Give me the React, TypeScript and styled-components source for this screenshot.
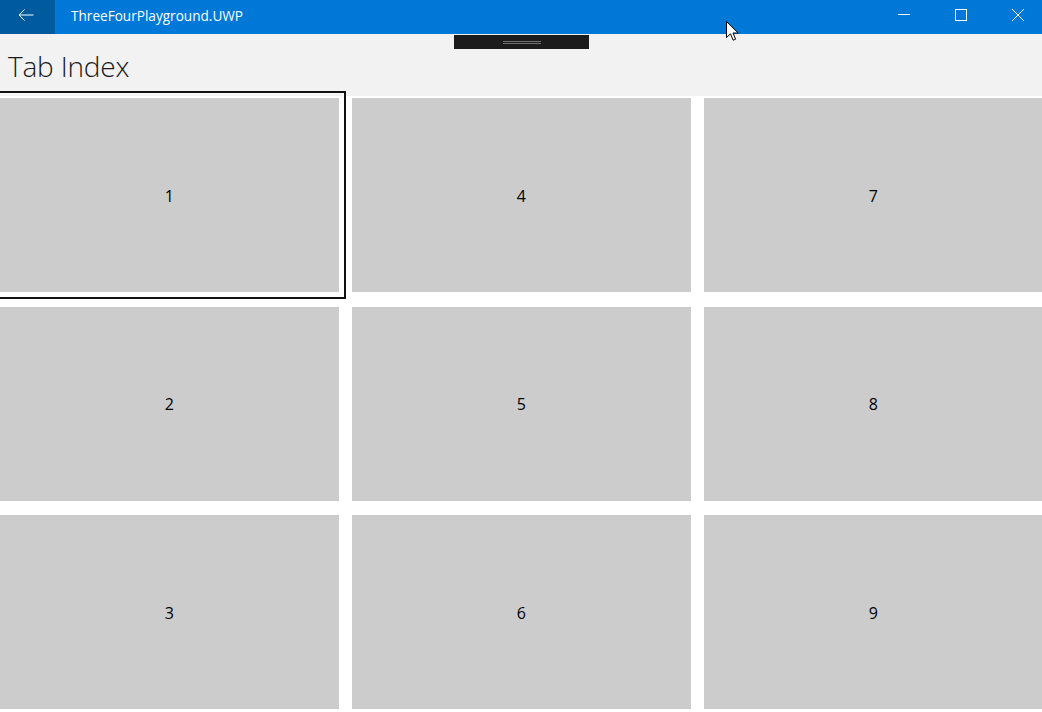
import styled, { createGlobalStyle } from "styled-components";

const GlobalStyle = createGlobalStyle`
  html, body {
    margin: 0;
    padding: 0;
    background: #ffffff;
    overflow: hidden;
  }
  body {
    font-family: "Open Sans", "Noto Sans", "Liberation Sans", sans-serif;
  }
`;

const Window = styled.div`
  position: relative;
  width: 1042px;
  height: 712px;
  overflow: hidden;
  background: #ffffff;
`;

const TitleBar = styled.div`
  display: flex;
  align-items: stretch;
  height: 34px;
  background: #0078d7;
  color: #ffffff;
`;

const BackButton = styled.div`
  width: 55px;
  display: flex;
  align-items: center;
  justify-content: center;
  background: #005a9e;
  padding: 0 4px 5px 0;
  box-sizing: border-box;
`;

const AppTitle = styled.div`
  flex: 1;
  display: flex;
  align-items: center;
  padding-left: 16px;
  padding-bottom: 4px;
  font-size: 13.6px;
`;

const Controls = styled.div`
  display: flex;
  margin-right: -4px;
`;

const ControlButton = styled.div`
  width: 57px;
  display: flex;
  align-items: center;
  justify-content: center;
  padding-bottom: 4px;
  box-sizing: border-box;
`;

const Header = styled.div`
  height: 62px;
  background: #f2f2f2;
  display: flex;
  align-items: center;
  padding-left: 8px;
  padding-top: 2px;
  box-sizing: border-box;
`;

const PageTitle = styled.h1`
  margin: 0;
  font-size: 28px;
  font-weight: 300;
  color: #1a1a1a;
  letter-spacing: -0.2px;
`;

const DragHandle = styled.div`
  position: absolute;
  left: 454px;
  top: 35px;
  width: 135px;
  height: 14px;
  background: #1b1b1b;
  display: flex;
  flex-direction: column;
  align-items: center;
  justify-content: center;
  gap: 1px;
`;

const HandleLine = styled.div`
  width: 38px;
  height: 1px;
  background: #707070;
`;

const Grid = styled.div`
  display: grid;
  grid-template-columns: repeat(3, 338.5px);
  grid-auto-rows: 194px;
  column-gap: 13.5px;
  row-gap: 14.5px;
  padding-top: 2px;
`;

const Cell = styled.div<{ $focused?: boolean }>`
  position: relative;
  background: #cccccc;
  display: flex;
  align-items: center;
  justify-content: center;
  font-size: 16px;
  color: #000000;
  padding-top: 1px;
  box-sizing: border-box;

  &::after {
    content: "";
    display: ${({ $focused }) => ($focused ? "block" : "none")};
    position: absolute;
    inset: -7px;
    border: 2px solid #111111;
    box-shadow: inset 0 0 0 1px rgba(255, 255, 255, 0.6);
    pointer-events: none;
  }
`;

const Cursor = styled.svg`
  position: absolute;
  left: 726px;
  top: 21px;
`;

const order = [1, 4, 7, 2, 5, 8, 3, 6, 9];

export default function App() {
  return (
    <>
      <GlobalStyle />
      <Window>
        <TitleBar>
          <BackButton>
            <svg width="16" height="12" viewBox="0 0 16 12">
              <path
                d="M15.5 6H1M6.5 0.5L1 6L6.5 11.5"
                fill="none"
                stroke="#ffffff"
                strokeWidth="1"
              />
            </svg>
          </BackButton>
          <AppTitle>ThreeFourPlayground.UWP</AppTitle>
          <Controls>
            <ControlButton>
              <svg width="12" height="12" viewBox="0 0 12 12">
                <path d="M0 5.5H12" stroke="#ffffff" strokeWidth="1" />
              </svg>
            </ControlButton>
            <ControlButton>
              <svg width="12" height="12" viewBox="0 0 12 12">
                <rect
                  x="0.5"
                  y="0.5"
                  width="11"
                  height="11"
                  fill="none"
                  stroke="#ffffff"
                  strokeWidth="1"
                />
              </svg>
            </ControlButton>
            <ControlButton>
              <svg width="12" height="12" viewBox="0 0 12 12">
                <path
                  d="M0 0L12 12M12 0L0 12"
                  stroke="#ffffff"
                  strokeWidth="1"
                />
              </svg>
            </ControlButton>
          </Controls>
        </TitleBar>
        <Header>
          <PageTitle>Tab Index</PageTitle>
        </Header>
        <Grid>
          {order.map((n) => (
            <Cell key={n} $focused={n === 1}>
              {n}
            </Cell>
          ))}
        </Grid>
        <DragHandle>
          <HandleLine />
          <HandleLine />
        </DragHandle>
        <Cursor width="13" height="20" viewBox="0 0 13 20">
          <path
            d="M0.5 0.5V16.5L4.5 12.8L7.2 19.2L9.6 18.2L7 12H12.2Z"
            fill="#ffffff"
            stroke="#000000"
            strokeWidth="1"
            strokeLinejoin="round"
          />
        </Cursor>
      </Window>
    </>
  );
}
